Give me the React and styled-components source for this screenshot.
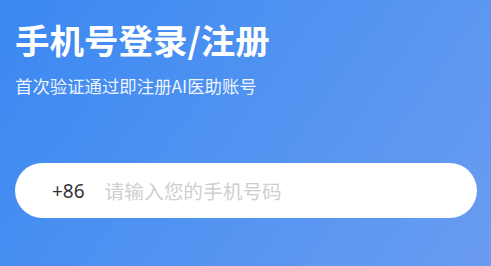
import styled, { createGlobalStyle } from "styled-components";

const Global = createGlobalStyle`
  html, body { margin: 0; padding: 0; }
  body { font-family: "Noto Sans CJK SC", "Noto Sans", sans-serif; }
`;

const Screen = styled.div`
  width: 491px; height: 266px; box-sizing: border-box; overflow: hidden;
  background: linear-gradient(125deg, #3b88f2 0%, #5394f1 55%, #6a9cf1 100%);
  padding: 16px 14px 0 15px;
  display: flex; flex-direction: column;
`;
const Title = styled.h1`
  margin: 0; color: #fff; font-size: 34.5px; font-weight: 700; line-height: 46px; letter-spacing: 0;
`;
const Sub = styled.p`
  margin: 12px 0 0; color: rgba(255,255,255,0.92); font-size: 17.4px; line-height: 24px; font-weight: 400;
`;
const Field = styled.div`
  margin-top: 65px; height: 55px; border-radius: 28px; background: #fff;
  display: flex; align-items: center; padding-left: 37px; gap: 20px;
`;
const Code = styled.span`font-size: 19px; color: #333; font-family: "Noto Sans", sans-serif;`;
const Input = styled.input`
  flex: 1; border: none; outline: none; background: transparent; padding: 0;
  font-size: 19.7px; font-family: "Noto Sans CJK SC", sans-serif; color: #333;
  &::placeholder { color: #cfcfcf; }
`;

export default function App() {
  return <>
    <Global />
    <Screen>
      <Title>手机号登录/注册</Title>
      <Sub>首次验证通过即注册AI医助账号</Sub>
      <Field>
        <Code>+86</Code>
        <Input placeholder="请输入您的手机号码" />
      </Field>
    </Screen>
  </>;
}
